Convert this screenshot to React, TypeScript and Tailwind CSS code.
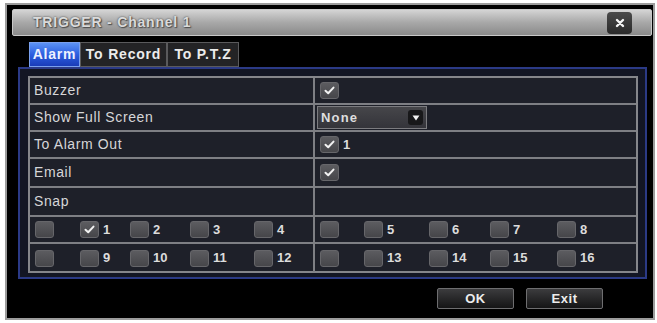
import { ReactNode } from "react";

const font = { fontFamily: '"Liberation Sans", Arial, sans-serif' };

function Check() {
  return (
    <svg width="11" height="9" viewBox="0 0 11 9" fill="none">
      <path d="M1.5 4.8 L4.2 7.3 L9.5 1.6" stroke="#f2f2f2" strokeWidth="2" strokeLinecap="round" strokeLinejoin="round" />
    </svg>
  );
}

function Box({ checked }: { checked?: boolean }) {
  return (
    <div className="w-[19px] h-[17px] rounded-[3px] bg-gradient-to-b from-[#5c5c60] to-[#46464a] border border-[#66666a] flex items-center justify-center shrink-0">
      {checked && <Check />}
    </div>
  );
}

function Row({ left, right, h = "h-[27px]", last }: { left: ReactNode; right: ReactNode; h?: string; last?: boolean }) {
  return (
    <div className={`grid grid-cols-[285px_1fr] ${h} ${last ? "" : "border-b-2 border-[#7e7f84]"}`}>
      <div className="border-r-2 border-[#7e7f84] flex items-center">{left}</div>
      <div className="flex items-center">{right}</div>
    </div>
  );
}

function Label({ children }: { children: ReactNode }) {
  return <span className="pl-[4px] text-[14px] tracking-[0.6px] text-[#d6d6d8]">{children}</span>;
}

function Channels({ nums, widths }: { nums: (number | null)[]; widths: number[] }) {
  return (
    <div className="flex items-center pl-[5px]">
      {nums.map((n, i) => (
        <div key={i} className="flex items-center gap-[4px]" style={{ width: widths[i] }}>
          <Box checked={n === 1} />
          {n !== null && <span className="text-[13px] font-bold text-[#dcdcdc]">{n}</span>}
        </div>
      ))}
    </div>
  );
}

export default function App() {
  const leftW = [45, 50, 60, 64, 50];
  const rightW = [44, 65, 61, 67, 50];
  return (
    <div className="w-[657px] h-[323px] bg-white overflow-hidden pt-[3px] pl-[5px]" style={font}>
      <div className="w-[650px] h-[317px] bg-black border-2 border-[#9c9c9c] flex flex-col">
        {/* title bar */}
        <div className="ml-[5px] mt-[4px] w-[640px] h-[27px] rounded-[2px] bg-gradient-to-b from-[#d4d4d4] via-[#a8a8a8] to-[#8a8a8a] border border-[#c8c8c8] flex items-center justify-between pl-[20px] pr-[19px]">
          <span
            className="text-[14px] font-bold tracking-[0.8px] text-[#dadada]"
            style={{ textShadow: "0 0 2px #3a3a3a, 1px 1px 1px #555" }}
          >
            TRIGGER - Channel 1
          </span>
          <div className="w-[25px] h-[22px] rounded-[4px] bg-gradient-to-b from-[#4a4a4a] to-[#2a2a2a] flex items-center justify-center">
            <svg width="10" height="10" viewBox="0 0 10 10">
              <path d="M2 2 L8 8 M8 2 L2 8" stroke="#f4f4f4" strokeWidth="2.4" strokeLinecap="round" />
            </svg>
          </div>
        </div>

        {/* tabs */}
        <div className="ml-[22px] mt-[6px] h-[25px] flex text-[14px] font-bold tracking-[0.8px]">
          <div className="w-[51px] flex items-center justify-center bg-gradient-to-b from-[#5c92f4] via-[#2d5ee0] to-[#1a3cb8] border border-[#7aa0ee] text-[#eef2ff]">
            Alarm
          </div>
          <div className="w-[87px] flex items-center justify-center bg-[#232325] border border-[#5a5a5c] text-[#ececec]">
            To Record
          </div>
          <div className="w-[72px] flex items-center justify-center bg-[#232325] border border-[#5a5a5c] text-[#ececec]">
            To P.T.Z
          </div>
        </div>

        {/* panel */}
        <div className="ml-[11px] w-[629px] h-[212px] border-2 border-[#2b3a86] bg-[#131624] pl-[8px] pt-[7px]">
          <div className="w-[610px] h-[197px] border-2 border-[#85868b] bg-[#1e2029]">
            <Row left={<Label>Buzzer</Label>} right={<div className="ml-[5px]"><Box checked /></div>} />
            <Row
              left={<Label>Show Full Screen</Label>}
              right={
                <div className="ml-[2px] w-[110px] h-[23px] bg-gradient-to-b from-[#46464a] to-[#34343a] border border-[#7c7c80] flex items-center justify-between pl-[3px] pr-[3px]">
                  <span className="text-[13px] font-bold tracking-[1.2px] text-[#dedede]">None</span>
                  <div className="w-[15px] h-[15px] rounded-[3px] bg-[#18181a] flex items-center justify-center">
                    <svg width="8" height="6" viewBox="0 0 8 6">
                      <path d="M0.5 0.5 L7.5 0.5 L4 5.5 Z" fill="#f2f2f2" />
                    </svg>
                  </div>
                </div>
              }
            />
            <Row
              left={<Label>To Alarm Out</Label>}
              right={
                <div className="ml-[5px] flex items-center gap-[4px]">
                  <Box checked />
                  <span className="text-[13px] font-bold text-[#dcdcdc]">1</span>
                </div>
              }
            />
            <Row h="h-[29px]" left={<Label>Email</Label>} right={<div className="ml-[5px]"><Box checked /></div>} />
            <Row h="h-[29px]" left={<Label>Snap</Label>} right={null} />
            <Row
              left={<Channels nums={[null, 1, 2, 3, 4]} widths={leftW} />}
              right={<Channels nums={[null, 5, 6, 7, 8]} widths={rightW} />}
            />
            <Row
              h="h-[28px]"
              last
              left={<Channels nums={[null, 9, 10, 11, 12]} widths={leftW} />}
              right={<Channels nums={[null, 13, 14, 15, 16]} widths={rightW} />}
            />
          </div>
        </div>

        {/* buttons */}
        <div className="mt-[9px] flex justify-end gap-[12px] mr-[50px]">
          {["OK", "Exit"].map((b) => (
            <div
              key={b}
              className="w-[77px] h-[21px] rounded-[2px] bg-gradient-to-b from-[#3c3c3e] to-[#151516] border border-[#6e6e70] flex items-center justify-center text-[13px] font-bold tracking-[0.6px] text-[#ececec]"
            >
              {b}
            </div>
          ))}
        </div>
      </div>
    </div>
  );
}
